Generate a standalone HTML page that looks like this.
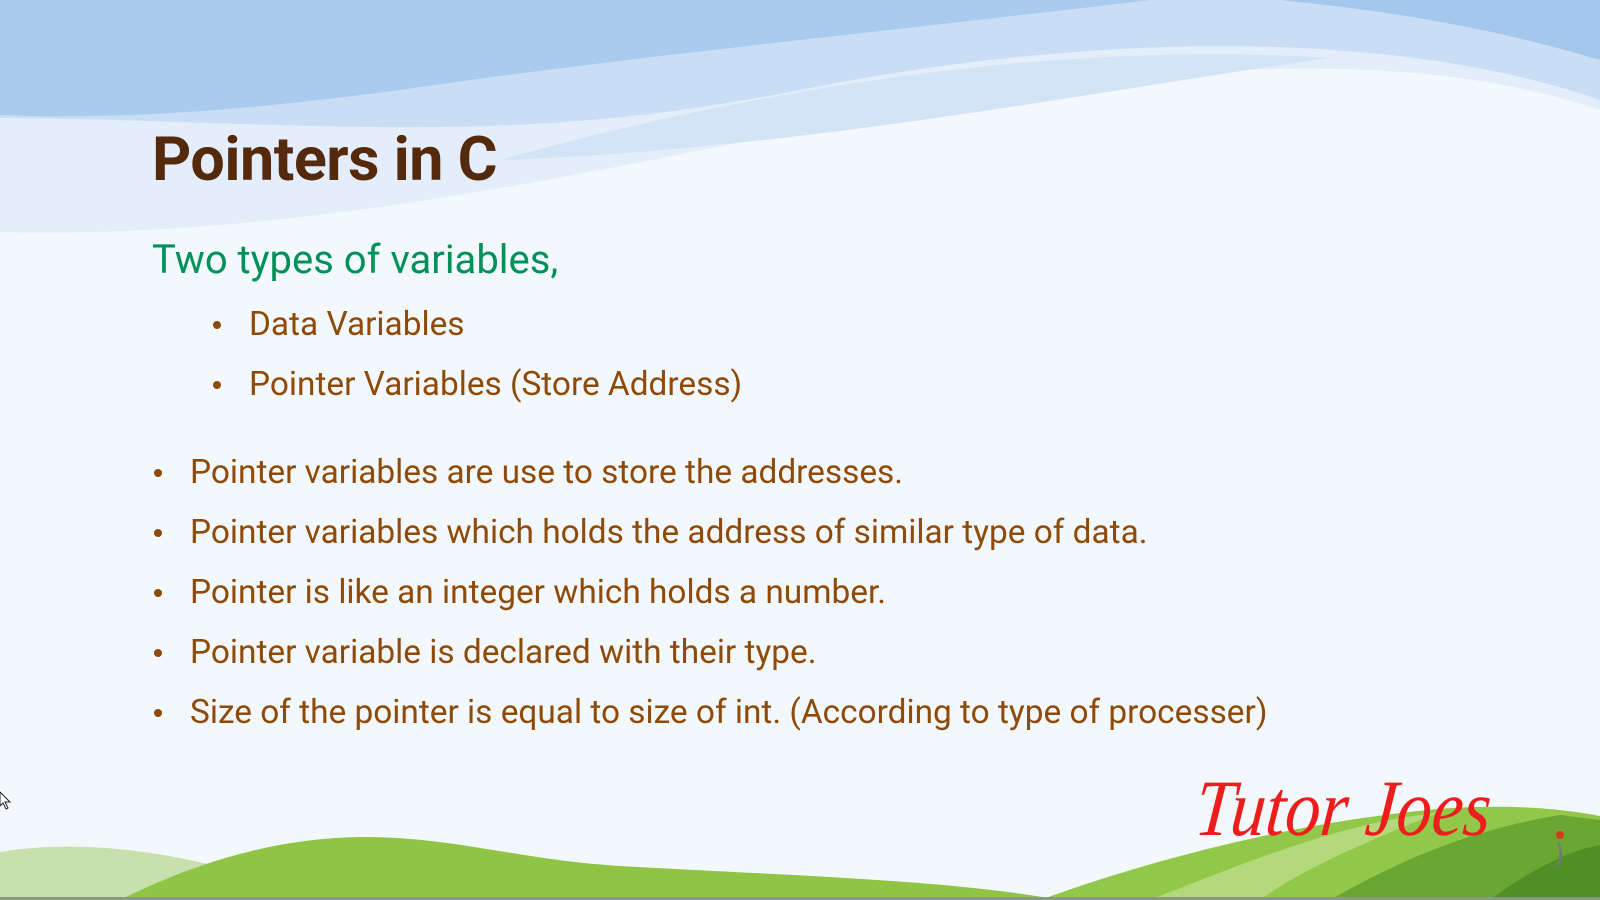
<!DOCTYPE html>
<html><head><meta charset="utf-8"><style>
html,body{margin:0;padding:0;}
body{width:1600px;height:900px;overflow:hidden;background:#f3f8fc;position:relative;font-family:"Roboto","Liberation Sans",sans-serif;}
svg.bg{position:absolute;left:0;top:0;}
.t{position:absolute;white-space:nowrap;}
.title{left:152px;top:123px;font-size:61px;font-weight:bold;color:#552a0c;letter-spacing:-0.5px;}
.sub{left:152px;top:236px;font-size:40px;color:#009159;}
.b{font-size:33.4px;color:#8f4a08;}
.dot{position:absolute;width:8px;height:8px;border-radius:50%;background:#8f4a08;}
.logo{left:1200px;top:764px;font-family:"Liberation Serif",serif;font-style:italic;font-size:80px;color:#ee1d1d;transform-origin:0 0;transform:scaleX(0.88) skewX(-6deg);}
</style></head><body>
<svg class="bg" width="1600" height="900" viewBox="0 0 1600 900">
<path d="M0 0H1600V110C1450 60 1250 50 900 110C600 170 300 240 0 232Z" fill="#e3eefa"/>
<path d="M0 0H1600V100C1400 30 1100 30 800 90C500 150 300 120 0 118Z" fill="#c9def5"/>
<path d="M500 160C750 90 1050 40 1330 58C1100 90 800 150 500 160Z" fill="#d3e4f7"/>
<path d="M0 0H1150C900 30 600 60 400 90C250 110 120 120 0 115Z" fill="#a9cbee"/>
<path d="M1280 0H1600V60C1500 30 1400 12 1280 0Z" fill="#a4c7ec"/>
<path d="M0 852C60 842 140 845 230 870L260 900H0Z" fill="#c8dfae"/>
<path d="M120 900C200 860 280 838 360 837C450 836 520 860 620 866C800 876 950 880 1060 900Z" fill="#8fc444"/>
<path d="M1040 900C1150 860 1300 820 1450 808C1520 804 1570 810 1600 816V900Z" fill="#92c84a"/>
<path d="M1150 900C1250 860 1330 830 1400 818L1440 812C1370 840 1300 870 1260 900Z" fill="#b4d97a"/>
<path d="M1330 900C1400 860 1470 830 1560 815L1600 820V900Z" fill="#6aa732"/>
<path d="M1490 900C1530 870 1570 850 1600 845V900Z" fill="#4f8f26"/>
<rect x="0" y="897" width="1600" height="3" fill="#8a9a80"/>
<path d="M0 792L0 806L3 803L6 809L8 808L5 802L10 802Z" fill="#fff" stroke="#222" stroke-width="1"/>
<circle cx="1560" cy="835" r="4" fill="#d23a1c"/>
<path d="M1558 843C1562 850 1562 862 1556 866" stroke="#777" stroke-width="2.5" fill="none"/>
</svg>
<div class="t title">Pointers in C</div>
<div class="t sub">Two types of variables,</div>
<div class="dot" style="left:213px;top:321px"></div>
<div class="t b" style="left:249px;top:305px">Data Variables</div>
<div class="dot" style="left:213px;top:381px"></div>
<div class="t b" style="left:249px;top:365px">Pointer Variables (Store Address)</div>
<div class="dot" style="left:154px;top:469px"></div>
<div class="t b" style="left:190px;top:453px">Pointer variables are use to store the addresses.</div>
<div class="dot" style="left:154px;top:529px"></div>
<div class="t b" style="left:190px;top:513px">Pointer variables which holds the address of similar type of data.</div>
<div class="dot" style="left:154px;top:589px"></div>
<div class="t b" style="left:190px;top:573px">Pointer is like an integer which holds a number.</div>
<div class="dot" style="left:154px;top:649px"></div>
<div class="t b" style="left:190px;top:633px">Pointer variable is declared with their type.</div>
<div class="dot" style="left:154px;top:709px"></div>
<div class="t b" style="left:190px;top:693px">Size of the pointer is equal to size of int. (According to type of processer)</div>
<div class="t logo">Tutor Joes</div>
</body></html>
